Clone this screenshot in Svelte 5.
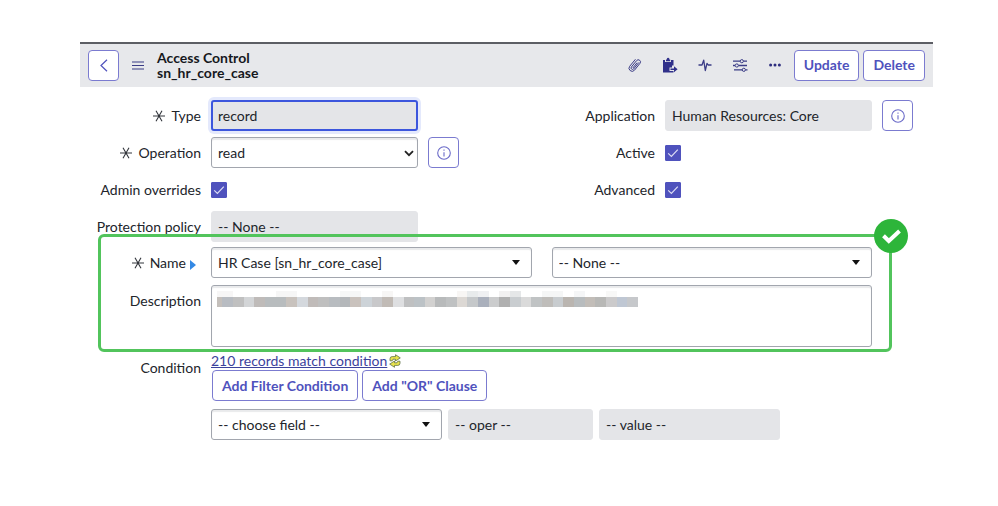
<script>
  let type = $state('record');
  let operation = $state('read');
  let active = $state(true);
  let advanced = $state(true);
  let adminOverrides = $state(true);

  // Redacted text: one colour per mosaic tile; each tile is two units wide.
  const tiles = [
    ['#c4bfbb', 1], ['#b8bcc2', 2], ['#c0c0c0', 2], ['#d3d5d7', 2], ['#bfbbb9', 2], ['#b8bcbe', 4],
    ['#c8c2bd', 2], ['#d4d8dd', 2], ['#c0bbb9', 2], ['#bfbfbf', 2], ['#b8bcc0', 2], ['#b4b7ba', 2],
    ['#c9c2bd', 2], ['#cdd3d8', 2], ['#c8c8ca', 2], ['#c1bbb6', 2], ['#dedfe1', 2], ['#bfc0c1', 2],
    ['#bcc2c6', 2], ['#d2d1d0', 2], ['#b8babb', 2], ['#bfc1c2', 2], ['#dcd8d4', 2], ['#c5c8ca', 2],
    ['#aab0bc', 2], ['#cbcccd', 2], ['#b0b0b0', 2], ['#c9cdd0', 2], ['#dadada', 2], ['#c0c3c4', 2],
    ['#bfbdba', 2], ['#c8cccf', 2], ['#bab5b0', 2], ['#b8bcbe', 2], ['#c2bdb8', 2], ['#b8b8b6', 2],
    ['#cbcacb', 2], ['#bfc7d3', 2], ['#c6c8cb', 2]
  ];
  let at = 0;
  const mosaic = tiles.map(([color, w]) => {
    const tile = { color, w, x: at };
    at += w;
    return tile;
  });
  const faint = [
    [0, 3, '#f7f6f6'], [11, 4, '#f6f6f6'], [23, 4, '#f6f7f7'], [31, 2, '#f7f6f5'], [45, 2, '#f8f6f4'],
    [47, 2, '#e8ebec'], [49, 2, '#eff0f2'], [53, 2, '#f2f1f1'], [55, 2, '#e5e7e8'], [61, 4, '#f5f6f6'],
    [67, 2, '#f5f6f7'], [73, 2, '#f8f8f7']
  ];
</script>

{#snippet star()}
  <svg class="star" viewBox="0 0 12 12" aria-hidden="true">
    <path d="M0 6h12M3 .8l6 10.4M9 .8L3 11.2" />
  </svg>
{/snippet}

{#snippet info()}
  <svg class="info" viewBox="0 0 14 14" aria-hidden="true">
    <circle cx="7" cy="7" r="6.3" />
    <path d="M7 6.2v4.2M7 3.6v1.2" />
  </svg>
{/snippet}

{#snippet caret()}
  <svg class="caret" viewBox="0 0 8 5" aria-hidden="true"><path d="M0 0h8L4 5z" /></svg>
{/snippet}

{#snippet tick()}
  <svg class="tick" viewBox="0 0 16 16" aria-hidden="true"><path d="M3.2 8.4l3.2 3.1 6.4-6.8" /></svg>
{/snippet}

<main>
  <header>
    <button class="btn square" aria-label="Back">
      <svg width="8" height="13" viewBox="0 0 8 13"><path d="M7 .8L1 6.5l6 5.7" fill="none" stroke="currentColor" stroke-width="1.2" /></svg>
    </button>
    <button class="icon menu" aria-label="Additional actions">
      <svg width="12" height="9" viewBox="0 0 12 9"><path d="M0 1h12M0 4.5h12M0 8h12" fill="none" stroke="currentColor" stroke-width="1.2" /></svg>
    </button>
    <h1>Access Control<br />sn_hr_core_case</h1>
    <button class="icon" aria-label="Attachments">
      <svg width="14" height="15" viewBox="0 0 14 15"><path d="M10.600 4.800L5.600 11a1.500 1.500 0 0 1-2.300-1.900l5.300-6.500a2.100 2.100 0 0 1 3.400 2.700L6.400 12.300a3.100 3.100 0 0 1-4.800-3.900l5.600-6.800M8.800 5L5 9.700" fill="none" stroke="currentColor" stroke-width="1" stroke-linecap="round" /></svg>
    </button>
    <button class="icon" aria-label="Copy to clipboard">
      <svg width="16" height="16" viewBox="0 0 16 16">
        <path d="M1 3h2v2h6V3h2.500v5.500H10v2H7.500v3.500H11.500V15.500H1z" fill="#30308a" />
        <path d="M4 4.200V2.400h1A1.100 1.100 0 0 1 6.100.8 1.100 1.100 0 0 1 7.200 2.400h1v1.800z" fill="#30308a" />
        <path d="M8.500 11.600h3.500V9.300l3.600 3-3.600 3v-2.200H8.500z" fill="#30308a" />
      </svg>
    </button>
    <button class="icon" aria-label="Activity">
      <svg width="14" height="13" viewBox="0 0 14 13"><path d="M.5 6H4L5.700 1.200 7.300 11.500 9 4.300l1.200 1.700h3.300" fill="none" stroke="currentColor" stroke-width="1.300" stroke-linejoin="round" /></svg>
    </button>
    <button class="icon" aria-label="Personalize form">
      <svg width="15" height="13" viewBox="0 0 15 13">
        <path d="M0 2.200h7M10.500 2.200H14M0 6.500h2M5.500 6.500H14M1 10.800h8.500M12.500 10.800h2" fill="none" stroke="currentColor" stroke-width="1.300" />
        <g fill="none" stroke="currentColor"><circle cx="8.800" cy="2.200" r="1.600" /><circle cx="3.800" cy="6.500" r="1.600" /><circle cx="10.800" cy="10.800" r="1.600" /></g>
      </svg>
    </button>
    <button class="icon" aria-label="More options">
      <svg width="12" height="4" viewBox="0 0 12 4"><g fill="#2e2e7f"><circle cx="1.600" cy="2" r="1.500" /><circle cx="6" cy="2" r="1.500" /><circle cx="10.400" cy="2" r="1.500" /></g></svg>
    </button>
    <button class="btn update">Update</button>
    <button class="btn">Delete</button>
  </header>

  <form onsubmit={(e) => e.preventDefault()}>
    <div class="columns">
      <div class="column">
        <div class="row">
          <label for="type">{@render star()}Type</label>
          <input id="type" class="field muted focused" readonly bind:value={type} />
        </div>
        <div class="row">
          <label for="operation">{@render star()}Operation</label>
          <div class="control">
            <select id="operation" class="field" bind:value={operation}>
              <option>read</option><option>write</option><option>create</option><option>delete</option>
            </select>
            <svg class="chevron" viewBox="0 0 10 7" aria-hidden="true"><path d="M1 1.200l4 4 4-4" /></svg>
          </div>
          <button class="btn square" aria-label="Operation details">{@render info()}</button>
        </div>
        <div class="row">
          <label for="overrides">Admin overrides</label>
          <div class="check"><input id="overrides" type="checkbox" bind:checked={adminOverrides} />{@render tick()}</div>
        </div>
        <div class="row">
          <label for="policy">Protection policy</label>
          <select id="policy" class="field muted" disabled><option>-- None --</option></select>
        </div>
      </div>
      <div class="column">
        <div class="row">
          <label for="application">Application</label>
          <input id="application" class="field muted" readonly value="Human Resources: Core" />
          <button class="btn square" aria-label="Application details">{@render info()}</button>
        </div>
        <div class="row">
          <label for="active">Active</label>
          <div class="check"><input id="active" type="checkbox" bind:checked={active} />{@render tick()}</div>
        </div>
        <div class="row">
          <label for="advanced">Advanced</label>
          <div class="check"><input id="advanced" type="checkbox" bind:checked={advanced} />{@render tick()}</div>
        </div>
      </div>
    </div>

    <div class="group">
      <div class="wide">
        <label for="table">
          {@render star()}Name
          <svg class="hint" viewBox="0 0 6 10" aria-hidden="true"><path d="M0 0l6 5-6 5z" /></svg>
        </label>
        <div class="pair">
          <div class="control">
            <select id="table" class="field"><option>HR Case [sn_hr_core_case]</option></select>
            {@render caret()}
          </div>
          <div class="control">
            <select class="field" aria-label="Field name"><option>-- None --</option></select>
            {@render caret()}
          </div>
        </div>
      </div>
      <div class="wide">
        <label for="description">Description</label>
        <div class="control">
          <textarea id="description" class="field"></textarea>
          <svg class="mosaic" viewBox="0 0 79 32" preserveAspectRatio="none" shape-rendering="crispEdges" aria-hidden="true">
            {#each faint as [x, w, color]}
              <rect {x} y="0" width={w} height="11" fill={color} />
            {/each}
            {#each mosaic as t}
              <rect x={t.x} y="11" width={t.w} height="21" fill={t.color} />
            {/each}
          </svg>
        </div>
      </div>
      <div class="highlight">
        <svg class="badge" viewBox="0 0 34 34" aria-hidden="true">
          <circle cx="17" cy="17" r="17" fill="#2db53a" />
          <path d="M9.500 16.800l5.300 5.200L25.500 12" fill="none" stroke="#fff" stroke-width="4" />
        </svg>
      </div>
    </div>

    <div class="wide">
      <label for="choose">Condition</label>
      <div>
        <div class="matches">
          <a href="#records">210 records match condition</a>
          <svg width="12" height="14" viewBox="0 0 12 14" aria-hidden="true">
            <g fill="#e9e34c" stroke="#5f7248" stroke-width=".8" stroke-linejoin="round">
              <path d="M1 6.800V4.800Q1 2.600 3.200 2.600H6.500V.7L11.300 3.900 6.500 7V5.200H4L3.200 6.800z" />
              <path d="M11 7.200v2q0 2.200-2.200 2.200H5.500v1.900L.7 10.100 5.500 7v1.800H8l.8-1.600z" />
            </g>
          </svg>
        </div>
        <div class="actions">
          <button class="btn">Add Filter Condition</button>
          <button class="btn">Add "OR" Clause</button>
        </div>
        <div class="filters">
          <div class="control choose">
            <select id="choose" class="field"><option>-- choose field --</option></select>
            {@render caret()}
          </div>
          <select class="field muted oper" aria-label="Operator" disabled><option>-- oper --</option></select>
          <input class="field muted value" aria-label="Value" readonly value="-- value --" />
        </div>
      </div>
    </div>
  </form>
</main>

<style>
  :global(body) {
    background: #fff;
  }

  main {
    margin: 42px 65px 0 80px;
    font: 14px/18px Lato, "Open Sans", sans-serif;
    color: #22252b;
  }

  header {
    display: flex;
    align-items: center;
    box-sizing: border-box;
    height: 45px;
    padding: 0 8px 1px;
    border-top: 2px solid #5c5e64;
    background: #e7e8eb;
  }

  h1 {
    flex: 1;
    margin: 0;
    font-size: 14px;
    line-height: 15px;
    font-weight: 700;
    color: #16181d;
  }

  button,
  input,
  select,
  textarea {
    font: inherit;
    color: inherit;
    margin: 0;
  }

  .btn {
    box-sizing: border-box;
    height: 31px;
    padding: 0 9px;
    border: 1px solid #7b7bd0;
    border-radius: 4px;
    background: #fff;
    color: #4f52bd;
    font-weight: 700;
    white-space: nowrap;
  }

  .btn + .btn {
    margin-left: 4px;
  }

  .square {
    display: grid;
    place-items: center;
    flex: none;
    width: 31px;
    padding: 0;
  }

  .icon {
    display: grid;
    place-items: center;
    width: 35px;
    height: 31px;
    padding: 0;
    border: 0;
    background: none;
    color: #3b3c86;
  }

  .menu {
    width: 38px;
  }

  .update {
    margin-left: 1px;
  }

  form {
    display: flex;
    flex-direction: column;
    gap: 5px;
    padding: 13px 20px 0 0;
  }

  .columns {
    display: grid;
    grid-template-columns: 1fr 1fr;
    gap: 75px;
  }

  .column,
  .group {
    display: flex;
    flex-direction: column;
    gap: 6px;
  }

  .row {
    display: grid;
    grid-template-columns: 121px minmax(0, 1fr) 31px;
    column-gap: 10px;
    align-items: start;
    height: 31px;
  }

  .wide {
    display: grid;
    grid-template-columns: 121px minmax(0, 1fr);
    column-gap: 10px;
    align-items: start;
    padding-right: 41px;
  }

  label {
    display: flex;
    align-items: center;
    justify-content: flex-end;
    height: 32px;
    white-space: nowrap;
  }

  .field {
    box-sizing: border-box;
    display: block;
    width: 100%;
    height: 31px;
    padding: 0 6px;
    border: 1px solid #a2a6ae;
    border-radius: 3px;
    outline: 0;
    background: #fff;
    box-shadow: inset 0 2px 1px #e9eaec;
    appearance: none;
    opacity: 1;
  }

  .muted {
    border-color: #e4e5e8;
    background: #e4e5e8;
    box-shadow: none;
  }

  .focused {
    border: 2px solid #3c56dd;
    padding: 0 5px;
    box-shadow: 0 0 0 3px #e4e9fc;
  }

  textarea.field {
    height: 62px;
    resize: none;
  }

  .control {
    position: relative;
  }

  .pair {
    display: grid;
    grid-template-columns: 1fr 1fr;
    gap: 20px;
  }

  .caret,
  .chevron {
    position: absolute;
    pointer-events: none;
    top: 13px;
    right: 12px;
    width: 8px;
    height: 5px;
    fill: #111;
  }

  .chevron {
    right: 4px;
    width: 10px;
    height: 7px;
    fill: none;
    stroke: #222;
    stroke-width: 1.8;
  }

  .star {
    width: 12px;
    height: 12px;
    margin-right: 6px;
    fill: none;
    stroke: #33363c;
    stroke-width: 1.1;
  }

  .hint {
    width: 6px;
    height: 10px;
    margin: 3px 5px 0 4px;
    fill: #3489e4;
  }

  .info {
    width: 14px;
    height: 14px;
    fill: none;
    stroke: #6a6ac8;
    stroke-width: 1.1;
  }

  .check {
    position: relative;
    width: 16px;
    height: 16px;
    margin-top: 8px;
  }

  .check input {
    display: block;
    width: 16px;
    height: 16px;
    border-radius: 1px;
    border: 1px solid #4f52bd;
    box-sizing: border-box;
    appearance: none;
  }

  .check input:checked {
    background: #4f52bd;
  }

  .tick {
    position: absolute;
    inset: 0;
    pointer-events: none;
    fill: none;
    stroke: #dcdcf4;
    stroke-width: 1.2;
  }

  .mosaic {
    position: absolute;
    top: 6px;
    left: 6px;
    width: 421px;
    height: 16px;
    max-width: calc(100% - 12px);
    pointer-events: none;
  }

  .group {
    position: relative;
  }

  .highlight {
    position: absolute;
    inset: -13px 21px -5px 18px;
    border: 3px solid #52c45c;
    border-radius: 6px;
    pointer-events: none;
  }

  .badge {
    position: absolute;
    top: -18px;
    right: -19px;
    width: 34px;
    height: 34px;
  }

  .matches {
    display: flex;
    align-items: center;
    gap: 2px;
    height: 18px;
  }

  a {
    color: #3c429c;
  }

  .actions {
    display: flex;
    padding-left: 1px;
  }

  .filters {
    display: flex;
    gap: 6px;
    margin-top: 8px;
  }

  .choose {
    width: 231px;
  }

  .oper {
    width: 145px;
  }

  .value {
    width: 181px;
  }
</style>
